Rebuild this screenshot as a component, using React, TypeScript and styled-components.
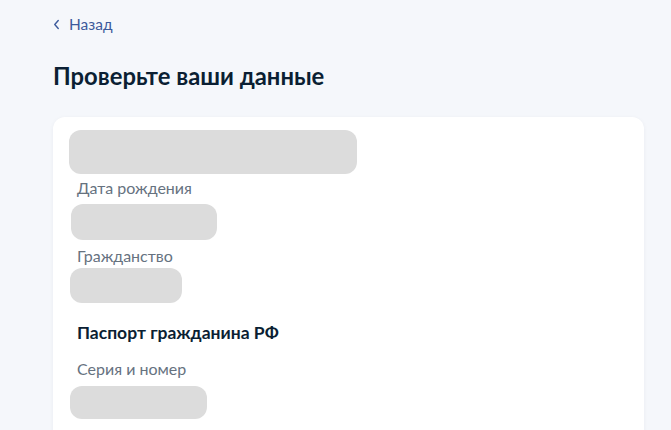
import styled, { createGlobalStyle } from "styled-components";

const GlobalStyle = createGlobalStyle`
  html, body {
    margin: 0;
    padding: 0;
    background: #f5f7fb;
    font-family: Lato, "Noto Sans", sans-serif;
    color: #0b1f33;
  }
`;

const fields = [
  { label: "Дата рождения", width: 146, height: 36, offset: 2, labelGap: 4, gap: 6 },
  { label: "Гражданство", width: 112, height: 35, offset: 1, labelGap: 6, gap: 2 },
];

export default function App() {
  return (
    <>
      <GlobalStyle />
      <Page>
        <BackLink href="#">
          <Chevron viewBox="0 0 8 12" aria-hidden>
            <path d="M6 1.5 L2 6 L6 10.5" />
          </Chevron>
          Назад
        </BackLink>
        <Title>Проверьте ваши данные</Title>
        <Card>
          <Skeleton $width={288} $height={44} $offset={0} />
          {fields.map((field) => (
            <Field key={field.label}>
              <Label $gap={field.labelGap}>{field.label}</Label>
              <Skeleton
                $width={field.width}
                $height={field.height}
                $offset={field.offset}
                style={{ marginTop: field.gap }}
              />
            </Field>
          ))}
          <SectionTitle>Паспорт гражданина РФ</SectionTitle>
          <Field>
            <Label $gap={15}>Серия и номер</Label>
            <Skeleton $width={137} $height={33} $offset={1} style={{ marginTop: 7 }} />
          </Field>
        </Card>
      </Page>
    </>
  );
}

const Page = styled.div`
  padding: 14px 27px 0 53px;
  height: 430px;
  box-sizing: border-box;
  overflow: hidden;
`;

const BackLink = styled.a`
  display: flex;
  align-items: center;
  gap: 9px;
  height: 20px;
  font-size: 15.5px;
  line-height: 20px;
  color: #3c5a9c;
  text-decoration: none;
`;

const Chevron = styled.svg`
  width: 7px;
  height: 11px;
  fill: none;
  stroke: #3c5a9c;
  stroke-width: 1.6;
  stroke-linecap: round;
  stroke-linejoin: round;
`;

const Title = styled.h1`
  margin: 28px 0 0;
  font-size: 23.8px;
  line-height: 28px;
  font-weight: 700;
  color: #0b1f33;
`;

const Card = styled.div`
  margin-top: 27px;
  background: #ffffff;
  border-radius: 12px;
  box-shadow: 0 1px 4px rgba(11, 31, 51, 0.05);
  padding: 13px 16px 40px;
  min-height: 340px;
`;

const Field = styled.div`
  display: flex;
  flex-direction: column;
  align-items: flex-start;
`;

const Skeleton = styled.div<{ $width: number; $height: number; $offset: number }>`
  width: ${(p) => p.$width}px;
  height: ${(p) => p.$height}px;
  margin-left: ${(p) => p.$offset}px;
  border-radius: 12px;
  background: #dcdcdc;
`;

const Label = styled.div<{ $gap: number }>`
  margin-top: ${(p) => p.$gap}px;
  padding-left: 8px;
  font-size: 16px;
  line-height: 20px;
  color: #66727f;
`;

const SectionTitle = styled.h2`
  margin: 19px 0 0;
  padding-left: 8px;
  font-size: 17.5px;
  line-height: 22px;
  font-weight: 700;
  color: #0b1f33;
`;
